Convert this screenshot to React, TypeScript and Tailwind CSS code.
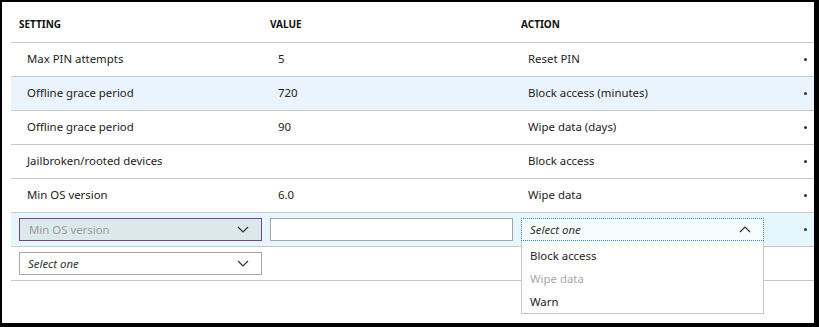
type Row = { setting: string; value: string; action: string; selected?: boolean };

const rows: Row[] = [
    {setting: 'Max PIN attempts', value: '5', action: 'Reset PIN'},
    {setting: 'Offline grace period', value: '720', action: 'Block access (minutes)', selected: true},
    {setting: 'Offline grace period', value: '90', action: 'Wipe data (days)'},
    {setting: 'Jailbroken/rooted devices', value: '', action: 'Block access'},
    {setting: 'Min OS version', value: '6.0', action: 'Wipe data'},
];

function Dot() {
    return <div className="w-[3px] h-[3px] rounded-full bg-[#333] ml-[40px]"/>;
}

function Chevron({up = false}: { up?: boolean }) {
    return (
        <svg width="12" height="7" viewBox="0 0 12 7" className="text-[#333]">
            <polyline points={up ? '1,6 6,1 11,6' : '1,1 6,6 11,1'} fill="none" stroke="currentColor"
                      strokeWidth="1.2"/>
        </svg>
    );
}

export default function App() {
    return (
        <div className="w-[819px] h-[327px] bg-black" style={{fontFamily: '"Noto Sans", sans-serif'}}>
            <div className="h-full bg-white border-l-2 border-t-2 border-r-[5px] border-b-[4px] border-black pl-[9px] text-[11.4px] text-[#222]">
                {/* header */}
                <div className="flex h-[41px] items-center border-b border-[#c8c8c8] text-[10px] font-bold text-[#111]">
                    <div className="w-[251px] pl-2 pt-[4px]">SETTING</div>
                    <div className="w-[251px] pl-2 pt-[4px]">VALUE</div>
                    <div className="w-[251px] pl-2 pt-[4px]">ACTION</div>
                </div>

                {rows.map((r, i) => (
                    <div key={i}
                         className={`flex h-[34px] items-center border-b border-[#c8c8c8] ${r.selected ? 'bg-[#eaf4fc]' : ''}`}>
                        <div className="w-[251px] pl-4 pb-[2px]">{r.setting}</div>
                        <div className="w-[251px] pl-4 pb-[2px]">{r.value}</div>
                        <div className="w-[251px] pl-[15px] pb-[2px]">{r.action}</div>
                        <Dot/>
                    </div>
                ))}

                {/* editing row */}
                <div className="flex h-[34px] items-center border-b border-[#c8c8c8] bg-[#e5f6fc]">
                    <div className="w-[251px] pl-2">
                        <div className="h-[23px] w-[243px] flex items-center justify-between border border-[#7b3f91] bg-[#dbe9ed] pl-[9px] pr-[12px] text-[#9b9b9b]">
                            <span>Min OS version</span>
                            <Chevron/>
                        </div>
                    </div>
                    <div className="w-[251px] pl-2">
                        <div className="h-[23px] w-[243px] border border-[#a6a6a6] bg-white"/>
                    </div>
                    <div className="w-[251px] pl-2 relative">
                        <div className="h-[23px] w-[243px] flex items-center justify-between border border-dotted border-[#2a8dd4] bg-[#f7fcfe] pl-[8px] pr-[12px] italic text-[#333]">
                            <span>Select one</span>
                            <Chevron up/>
                        </div>
                        <div className="absolute left-2 top-[23px] w-[243px] bg-white border border-[#c8c8c8] border-t-0 pt-[3px] z-10">
                            <div className="h-[23px] flex items-center pl-[8px] text-[#222]">Block access</div>
                            <div className="h-[23px] flex items-center pl-[8px] text-[#a8a8a8]">Wipe data</div>
                            <div className="h-[23px] flex items-center pl-[8px] text-[#222]">Warn</div>
                        </div>
                    </div>
                    <Dot/>
                </div>

                {/* new row */}
                <div className="flex h-[34px] items-center border-b border-[#c8c8c8]">
                    <div className="w-[251px] pl-2">
                        <div className="h-[23px] w-[243px] flex items-center justify-between border border-[#a6a6a6] bg-white pl-[8px] pr-[12px] italic text-[#333]">
                            <span>Select one</span>
                            <Chevron/>
                        </div>
                    </div>
                </div>
            </div>
        </div>
    );
}
